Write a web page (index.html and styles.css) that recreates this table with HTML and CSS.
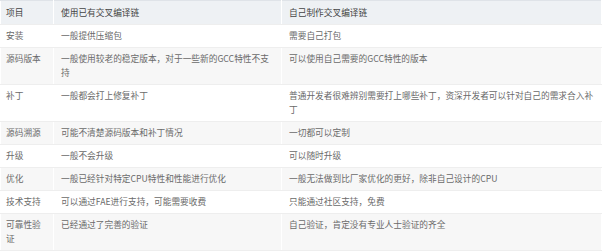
FILE: index.html
```html
<!DOCTYPE html>
<html lang="zh">
<head>
<meta charset="utf-8">
<link rel="stylesheet" href="styles.css">
</head>
<body>
<table class="cmp">
  <colgroup>
    <col class="c1"><col class="c2"><col class="c3">
  </colgroup>
  <thead>
    <tr><th class="first">项目</th><th>使用已有交叉编译链</th><th>自己制作交叉编译链</th></tr>
  </thead>
  <tbody>
    <tr><td class="first">安装</td><td>一般提供压缩包</td><td>需要自己打包</td></tr>
    <tr class="alt"><td class="first">源码版本</td><td>一般使用较老的稳定版本，对于一些新的GCC特性不支持</td><td>可以使用自己需要的GCC特性的版本</td></tr>
    <tr><td class="first">补丁</td><td>一般都会打上修复补丁</td><td>普通开发者很难辨别需要打上哪些补丁，资深开发者可以针对自己的需求合入补丁</td></tr>
    <tr class="alt"><td class="first">源码溯源</td><td>可能不清楚源码版本和补丁情况</td><td>一切都可以定制</td></tr>
    <tr><td class="first">升级</td><td>一般不会升级</td><td>可以随时升级</td></tr>
    <tr class="alt"><td class="first">优化</td><td>一般已经针对特定CPU特性和性能进行优化</td><td>一般无法做到比厂家优化的更好，除非自己设计的CPU</td></tr>
    <tr><td class="first">技术支持</td><td>可以通过FAE进行支持，可能需要收费</td><td>只能通过社区支持，免费</td></tr>
    <tr class="alt"><td class="first">可靠性验证</td><td>已经通过了完善的验证</td><td>自己验证，肯定没有专业人士验证的齐全</td></tr>
  </tbody>
</table>
</body>
</html>
```
FILE: styles.css
```css
html, body {
  margin: 0;
  padding: 0;
  background: #ffffff;
}
.cmp {
  border-collapse: collapse;
  table-layout: fixed;
  width: 601px;
  font-family: "Noto Sans CJK SC", "Noto Sans", sans-serif;
  font-size: 8.7px;
  line-height: 14px;
  color: #6a6a6a;
}
.c1 { width: 53px; }
.c2 { width: 228px; }
.c3 { width: 320px; }
.cmp th, .cmp td {
  text-align: left;
  vertical-align: top;
  padding: 4px 5px 4px 7px;
  border-left: 1px solid #ffffff;
  border-right: 1px solid #ffffff;
  border-bottom: 1px solid #eeeeee;
  word-break: break-all;
}
.cmp th {
  font-weight: normal;
  color: #444444;
  background: #eef1f4;
  border-top: 1px solid #dfe3e8;
  padding-top: 5px;
  padding-bottom: 4px;
}
.cmp .first {
  padding-left: 5px;
  padding-right: 5px;
}
.cmp tr.alt td {
  background: #f7f7f7;
}
```
